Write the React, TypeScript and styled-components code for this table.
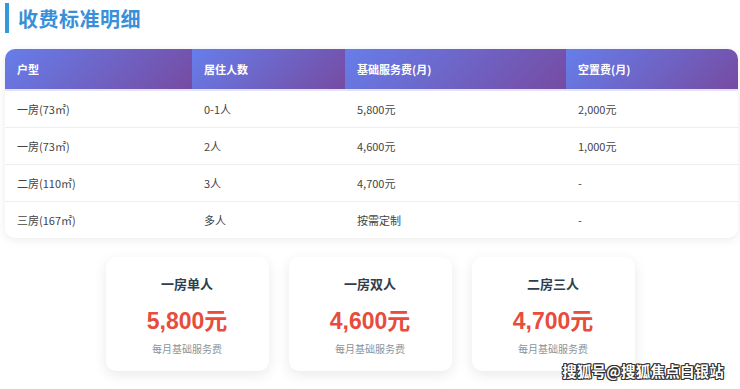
import React from "react";
import styled, { createGlobalStyle } from "styled-components";

const GlobalStyle = createGlobalStyle`
  html, body { margin: 0; padding: 0; background: #ffffff; }
  body {
    font-family: "Noto Sans CJK SC", "Noto Sans", "Liberation Sans", sans-serif;
    color: #333;
  }
`;

const Page = styled.div`
  position: relative;
  width: 740px;
  height: 389px;
  overflow: hidden;
  padding: 3px 2px 0 5px;
  box-sizing: border-box;
`;

const Title = styled.h2`
  margin: 0;
  border-left: 4px solid #3498db;
  padding-left: 9px;
  height: 30px;
  display: flex;
  align-items: center;
  font-size: 20px;
  font-weight: 700;
  color: #3a8fd9;
  letter-spacing: 0.5px;
`;

const TableCard = styled.div`
  margin-top: 16px;
  border-radius: 10px;
  overflow: hidden;
  background: #fff;
  box-shadow: 0 2px 10px rgba(0, 0, 0, 0.08);
`;

const Table = styled.table`
  width: 100%;
  border-collapse: collapse;
  table-layout: fixed;
`;

const Th = styled.th<{ $w: number }>`
  width: ${(p) => p.$w}px;
  background: linear-gradient(135deg, #667eea 0%, #764ba2 100%);
  color: #fff;
  font-size: 11px;
  font-weight: 600;
  text-align: left;
  padding: 0 12px;
  height: 41px;
  border-bottom: 2px solid #e6e3f5;
  box-sizing: border-box;
`;

const Td = styled.td`
  font-size: 11px;
  color: #444;
  padding: 0 12px;
  height: 37px;
  box-sizing: border-box;
`;

const Tr = styled.tr`
  & + & td { border-top: 1px solid #eeeeee; }
`;

const Cards = styled.div`
  margin-top: 19px;
  display: flex;
  justify-content: center;
  gap: 20px;
  padding-right: 3px;
`;

const Card = styled.div`
  width: 163px;
  height: 114px;
  box-sizing: border-box;
  padding: 18px 10px 0;
  background: #fff;
  border-radius: 10px;
  box-shadow: 0 4px 14px rgba(0, 0, 0, 0.09);
  text-align: center;
`;

const CardTitle = styled.div`
  font-size: 13px;
  line-height: 18px;
  font-weight: 700;
  color: #2c3e50;
`;

const Price = styled.div`
  margin-top: 14px;
  font-family: "Liberation Sans", "Noto Sans CJK SC", sans-serif;
  font-size: 23px;
  line-height: 28px;
  font-weight: 700;
  color: #e74c3c;
`;

const Note = styled.div`
  margin-top: 7px;
  font-size: 10px;
  line-height: 14px;
  color: #8a9499;
`;

const Watermark = styled.div`
  position: absolute;
  right: 16px;
  bottom: 8px;
  font-size: 14.5px;
  font-weight: 700;
  color: #fff;
  letter-spacing: 0.2px;
  text-shadow: -1px -1px 0 #333, 1px -1px 0 #333, -1px 1px 0 #333, 1px 1px 0 #333,
    0 1px 0 #333, 0 -1px 0 #333, 1px 0 0 #333, -1px 0 0 #333;
`;

const cols = [
  { label: "户型", w: 187 },
  { label: "居住人数", w: 153 },
  { label: "基础服务费(月)", w: 221 },
  { label: "空置费(月)", w: 172 },
];

const rows = [
  ["一房(73㎡)", "0-1人", "5,800元", "2,000元"],
  ["一房(73㎡)", "2人", "4,600元", "1,000元"],
  ["二房(110㎡)", "3人", "4,700元", "-"],
  ["三房(167㎡)", "多人", "按需定制", "-"],
];

const cards = [
  { t: "一房单人", p: "5,800元" },
  { t: "一房双人", p: "4,600元" },
  { t: "二房三人", p: "4,700元" },
];

export default function App() {
  return (
    <>
      <GlobalStyle />
      <Page>
        <Title>收费标准明细</Title>
        <TableCard>
          <Table>
            <thead>
              <tr>
                {cols.map((c) => (
                  <Th key={c.label} $w={c.w}>
                    {c.label}
                  </Th>
                ))}
              </tr>
            </thead>
            <tbody>
              {rows.map((r, i) => (
                <Tr key={i}>
                  {r.map((v, j) => (
                    <Td key={j}>{v}</Td>
                  ))}
                </Tr>
              ))}
            </tbody>
          </Table>
        </TableCard>
        <Cards>
          {cards.map((c) => (
            <Card key={c.t}>
              <CardTitle>{c.t}</CardTitle>
              <Price>{c.p}</Price>
              <Note>每月基础服务费</Note>
            </Card>
          ))}
        </Cards>
        <Watermark>搜狐号@搜狐焦点白银站</Watermark>
      </Page>
    </>
  );
}
